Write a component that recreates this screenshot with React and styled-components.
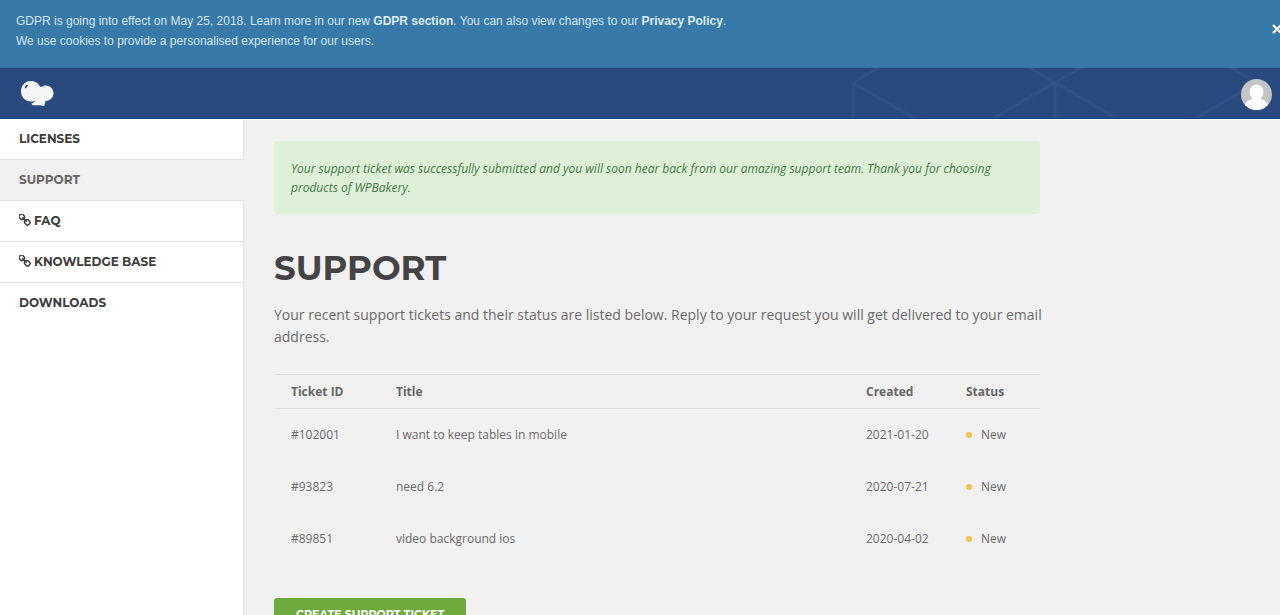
import React from "react";
import styled, { createGlobalStyle } from "styled-components";

const headingFont = `Montserrat, Inter, "Open Sans", sans-serif`;
const bodyFont = `"Open Sans", "Noto Sans", sans-serif`;

const GlobalStyle = createGlobalStyle`
  * {
    box-sizing: border-box;
  }
  html, body {
    margin: 0;
    background: #f1f1f1;
  }
  body {
    font-family: ${bodyFont};
    font-size: 12px;
    color: #6b6b6b;
  }
`;

const Page = styled.div`
  display: flex;
  flex-direction: column;
  height: 100vh;
  overflow: hidden;
`;

const Notice = styled.div`
  display: flex;
  flex: none;
  justify-content: space-between;
  height: 68px;
  padding: 11px 0 0 16px;
  overflow: hidden;
  background: #3779a8;
  border-bottom: 1px solid #3170a0;
  font-family: Arial, "Liberation Sans", sans-serif;
  line-height: 20px;
  color: #d3e5f2;
`;

const NoticeText = styled.p`
  margin: 0;
`;

const NoticeLink = styled.a`
  font-weight: bold;
  color: #dcebf6;
  text-decoration: none;
`;

const Close = styled.button`
  flex: none;
  width: 8px;
  height: 36px;
  padding: 0;
  border: none;
  background: none;
  color: #fff;
  cursor: pointer;
`;

const Header = styled.header`
  position: relative;
  display: flex;
  flex: none;
  align-items: center;
  justify-content: space-between;
  height: 51px;
  padding: 0 8px 0 20px;
  background: #294a7f;
  border-bottom: 1px solid #1f3f77;
  box-shadow: 0 1px 0 #fff;
`;

const Pattern = styled.svg`
  position: absolute;
  top: 0;
  right: 0;
`;

const HomeLink = styled.a`
  display: flex;
`;

const Avatar = styled.button`
  position: relative;
  display: flex;
  margin-top: 3px;
  padding: 0;
  border: none;
  border-radius: 50%;
  background: none;
  cursor: pointer;
`;

const Columns = styled.div`
  display: flex;
  flex: 1;
`;

const Sidebar = styled.nav`
  flex: none;
  width: 244px;
  background: #fff;
  border-right: 1px solid #e0e0e0;
`;

const MenuLink = styled.a`
  display: flex;
  align-items: center;
  gap: 3px;
  height: 41px;
  margin-right: ${props => (props.$active ? "-1px" : "0")};
  padding: 0 0 2px 19px;
  border-bottom: 1px solid ${props => (props.$last ? "transparent" : "#e2e2e2")};
  background: ${props => (props.$active ? "#f1f1f1" : "#fff")};
  font-family: ${headingFont};
  font-weight: 700;
  color: ${props => (props.$active ? "#666" : "#3c3c3c")};
  text-decoration: none;
  text-transform: uppercase;
`;

const Main = styled.main`
  flex: 1;
  min-width: 0;
  max-width: 826px;
  padding: 22px 30px 0;
`;

const Alert = styled.div`
  padding: 18px 17px 17px;
  border-radius: 3px;
  background: #dff0d8;
  font-style: italic;
  line-height: 19px;
  color: #457a48;
`;

const Title = styled.h1`
  margin: 32px 0 14px;
  font-family: ${headingFont};
  font-size: 34px;
  line-height: 44px;
  font-weight: 700;
  color: #444;
  text-transform: uppercase;
`;

const Intro = styled.p`
  margin: 0 -12px 26px 0;
  font-size: 14px;
  line-height: 22px;
`;

const Table = styled.table`
  width: 100%;
  table-layout: fixed;
  border-collapse: collapse;
`;

const HeadCell = styled.th`
  width: ${props => props.$width || "auto"};
  height: 34px;
  padding: 0 0 0 ${props => (props.$first ? "17px" : "0")};
  border-top: 1px solid #dfdfdf;
  border-bottom: 1px solid #dfdfdf;
  text-align: left;
  font-weight: 700;
  color: #666;
`;

const Cell = styled.td`
  height: 52px;
  padding: 0 0 0 ${props => (props.$first ? "17px" : "0")};
`;

const Status = styled.span`
  display: flex;
  align-items: center;
  gap: 9px;
  &::before {
    content: "";
    width: 6px;
    height: 6px;
    border-radius: 50%;
    background: #f3c14f;
  }
`;

const CreateButton = styled.button`
  height: 32px;
  margin-top: 33px;
  padding: 0 22px;
  border: none;
  border-radius: 3px;
  background: #6dab3c;
  font-family: ${headingFont};
  font-size: 11px;
  font-weight: 700;
  color: #fff;
  text-transform: uppercase;
  cursor: pointer;
`;

const ChainIcon = () => (
  <svg width="12" height="12" viewBox="128 128 1536 1536" fill="currentColor" aria-hidden="true">
    <path d="M1456 1216q0-40-28-68l-208-208q-28-28-68-28-42 0-72 32 3 3 19 18.500t21.500 21.500 15 19 13 25.500 3.500 27.500q0 40-28 68t-68 28q-15 0-27.500-3.500t-25.500-13-19-15-21.500-21.500-18.500-19q-33 31-33 73 0 40 28 68l206 207q27 27 68 27 40 0 68-26l147-146q28-28 28-67zm-703-705q0-40-28-68l-206-207q-28-28-68-28-39 0-68 27l-147 146q-28 28-28 67 0 40 28 68l208 208q27 27 68 27 42 0 72-31-3-3-19-18.500t-21.500-21.500-15-19-13-25.500-3.500-27.500q0-40 28-68t68-28q15 0 27.500 3.500t25.500 13 19 15 21.500 21.500 18.500 19q33-31 33-73zm895 705q0 120-85 203l-147 146q-83 83-203 83-121 0-204-85l-206-207q-83-83-83-203 0-123 88-209l-88-88q-86 88-208 88-120 0-204-84l-208-208q-84-84-84-204t85-203l147-146q83-83 203-83 121 0 204 85l206 207q83 83 83 203 0 123-88 209l88 88q86-88 208-88 120 0 204 84l208 208q84 84 84 204z" />
  </svg>
);

const Logo = () => (
  <svg width="34" height="27" viewBox="0 0 34 27" aria-hidden="true">
    <path
      fill="#f5f5f5"
      d="M11 1C15 1 18.300 3.400 19.800 6.300C20.700 7.400 22.200 6.500 23.500 5.700C28.500 4.300 33.500 8 33.500 13C33.500 17.500 30.500 20.500 25.500 21L24.300 26C20.500 24.800 16 25.400 12.500 25.200L11.300 23.500C13 23.100 14.500 22.200 15.200 20.700C13.800 21.300 12.700 21.500 11 21.500C5.200 21.500 1 17 1 11.300C1 5.500 5.200 1 11 1Z"
    />
    <path d="M5.500 7.500L7 5.500" stroke="#294a7f" strokeWidth="1.500" strokeLinecap="round" />
    <path d="M22 6.600Q24 6.500 25.500 7.200" stroke="#9dacc5" strokeWidth="0.700" fill="none" />
  </svg>
);

const AvatarIcon = () => (
  <svg width="31" height="31" viewBox="0 0 31 31" aria-hidden="true">
    <clipPath id="avatar">
      <circle cx="15.500" cy="15.500" r="15.500" />
    </clipPath>
    <g clipPath="url(#avatar)">
      <path fill="#c4c4c4" d="M0 0h31v31H0z" />
      <ellipse cx="15.500" cy="13" rx="7" ry="7.500" fill="#fff" />
      <path fill="#fff" d="M11 18h9v2c3.500 1 6.500 3.500 8 7v4h-25v-4c1.500-3.500 4.500-6 8-7z" />
    </g>
  </svg>
);

const menu = [
  { label: "Licenses", to: "#licenses" },
  { label: "Support", to: "#support", active: true },
  { label: "FAQ", to: "#faq", external: true },
  { label: "Knowledge Base", to: "#knowledge-base", external: true },
  { label: "Downloads", to: "#downloads" }
];

const tickets = [
  { id: "#102001", title: "I want to keep tables in mobile", created: "2021-01-20", status: "New" },
  { id: "#93823", title: "need 6.2", created: "2020-07-21", status: "New" },
  { id: "#89851", title: "video background ios", created: "2020-04-02", status: "New" }
];

const App = () => (
  <Page>
    <GlobalStyle />
    <Notice>
      <NoticeText>
        GDPR is going into effect on May 25, 2018. Learn more in our new{" "}
        <NoticeLink href="#gdpr">GDPR section</NoticeLink>. You can also view changes to our{" "}
        <NoticeLink href="#privacy">Privacy Policy</NoticeLink>.
        <br />
        We use cookies to provide a personalised experience for our users.
      </NoticeText>
      <Close aria-label="Close">
        <svg width="10" height="10" viewBox="0 0 10 10" stroke="currentColor" strokeWidth="2.200">
          <path d="M1 1l8 8M9 1L1 9" />
        </svg>
      </Close>
    </Notice>
    <Header>
      <Pattern width="430" height="50" viewBox="0 0 430 50" fill="none" stroke="#2f5188" strokeWidth="3" aria-hidden="true">
        <path d="M3 51V15L30 -1M3 15L66 51M205 51V15M142 51L232 -1M178 -1L268 51M380 -1L407 15L344 51" />
      </Pattern>
      <HomeLink href="#home" aria-label="WPBakery">
        <Logo />
      </HomeLink>
      <Avatar aria-label="Account">
        <AvatarIcon />
      </Avatar>
    </Header>
    <Columns>
      <Sidebar>
        {menu.map((item, index) => (
          <MenuLink
            key={item.label}
            href={item.to}
            $active={item.active}
            $last={index === menu.length - 1}
          >
            {item.external && <ChainIcon />}
            {item.label}
          </MenuLink>
        ))}
      </Sidebar>
      <Main>
        <Alert role="status">
          Your support ticket was successfully submitted and you will soon hear back from our
          amazing support team. Thank you for choosing products of WPBakery.
        </Alert>
        <Title>Support</Title>
        <Intro>
          Your recent support tickets and their status are listed below. Reply to your request you
          will get delivered to your email address.
        </Intro>
        <Table>
          <thead>
            <tr>
              <HeadCell $first $width="122px">Ticket ID</HeadCell>
              <HeadCell>Title</HeadCell>
              <HeadCell $width="100px">Created</HeadCell>
              <HeadCell $width="74px">Status</HeadCell>
            </tr>
          </thead>
          <tbody>
            {tickets.map(ticket => (
              <tr key={ticket.id}>
                <Cell $first>{ticket.id}</Cell>
                <Cell>{ticket.title}</Cell>
                <Cell>{ticket.created}</Cell>
                <Cell>
                  <Status>{ticket.status}</Status>
                </Cell>
              </tr>
            ))}
          </tbody>
        </Table>
        <CreateButton>Create support ticket</CreateButton>
      </Main>
    </Columns>
  </Page>
);

export default App;
